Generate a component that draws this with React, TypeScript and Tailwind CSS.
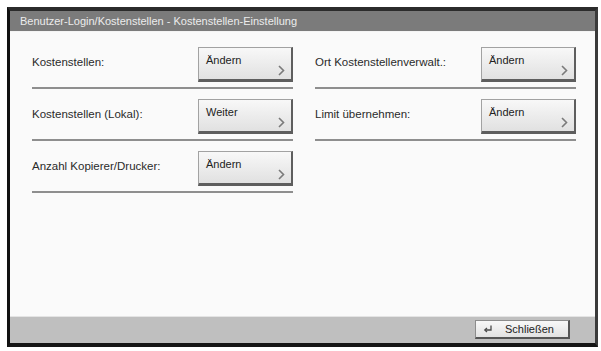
import React from 'react';

type Item = { label: string; action: string };

const leftItems: Item[] = [
  { label: 'Kostenstellen:', action: 'Ändern' },
  { label: 'Kostenstellen (Lokal):', action: 'Weiter' },
  { label: 'Anzahl Kopierer/Drucker:', action: 'Ändern' },
];

const rightItems: Item[] = [
  { label: 'Ort Kostenstellenverwalt.:', action: 'Ändern' },
  { label: 'Limit übernehmen:', action: 'Ändern' },
];

export default function App() {
  return (
    <div className="w-[601px] h-[351px] bg-white pt-[7px] pl-[7px] font-['Liberation_Sans',Arial,sans-serif]">
      <div className="w-[591px] h-[340px] flex flex-col border-l-[3px] border-t-[4px] border-r-[3px] border-b-[4px] border-l-[#111] border-t-[#2b2b2b] border-r-[#3a3a3a] border-b-[#151515]">
        {/* Title bar */}
        <div className="h-[21px] shrink-0 flex items-center pl-[10px] bg-[#7b7b7b] border-b border-[#f4f4f4] text-[11px] text-[#ececec] leading-none">
          Benutzer-Login/Kostenstellen - Kostenstellen-Einstellung
        </div>

        {/* Content */}
        <div className="flex-1 bg-[#fafafa] pl-[22px] pt-[15px] flex gap-[22px]">
          <Column items={leftItems} />
          <Column items={rightItems} />
        </div>

        {/* Bottom bar */}
        <div className="h-[27px] shrink-0 bg-[#bfbfbf] border-t border-[#e4e4e4] flex justify-end pt-[3px] pr-[25px]">
          <button className="w-[95px] h-[19px] flex items-center border border-[#8c8c8c] border-r-2 border-b-2 border-r-[#555] border-b-[#555] bg-gradient-to-b from-[#f8f8f8] to-[#e2e2e2]">
            <svg width="10" height="8" viewBox="0 0 10 8" className="ml-[7px]" fill="none" stroke="#4a4a4a" strokeWidth="1.3">
              <path d="M8 0.5 V5 H2" />
              <path d="M4 3 L1.8 5 L4 7" />
            </svg>
            <span className="ml-[12px] text-[11px] text-[#222] leading-none">Schließen</span>
          </button>
        </div>
      </div>
    </div>
  );
}

function Column({ items }: { items: Item[] }) {
  return (
    <div className="w-[261px] flex flex-col">
      {items.map((it) => (
        <div key={it.label} className="flex flex-col pb-[10px]">
          <div className="h-[35px] flex justify-between items-start">
            <span className="pt-[8px] text-[11.5px] leading-[14px] text-[#2a2a2a]">{it.label}</span>
            <ActionButton text={it.action} />
          </div>
          <div className="mt-[5px] h-[2px] bg-[#8e8e8e]" />
        </div>
      ))}
    </div>
  );
}

function ActionButton({ text }: { text: string }) {
  return (
    <button className="relative w-[95px] h-[35px] text-left pl-[7px] pt-[6px] self-start flex items-start border border-[#a2a2a2] border-r-2 border-b-[3px] border-r-[#5e5e5e] border-b-[#5e5e5e] bg-gradient-to-b from-[#f8f8f8] to-[#e1e1e1]">
      <span className="text-[11px] leading-[13px] text-[#222]">{text}</span>
      <svg width="7" height="11" viewBox="0 0 7 11" className="absolute right-[6px] bottom-[3px]" fill="none" stroke="#7a7a7a" strokeWidth="1.6">
        <path d="M1 1 L5.5 5.5 L1 10" />
      </svg>
    </button>
  );
}
